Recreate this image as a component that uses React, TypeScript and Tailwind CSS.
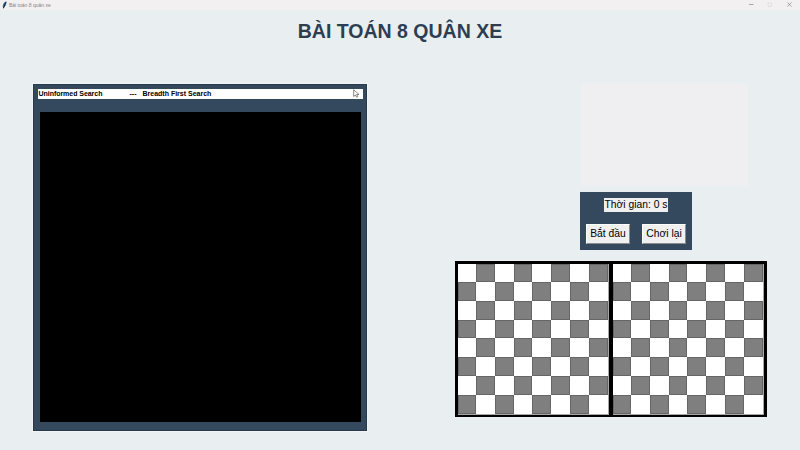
const cells = Array.from({ length: 64 }, (_, i) => (Math.floor(i / 8) + i) % 2 === 1);

function Board() {
  return (
    <div className="h-[151px] w-[151px] shrink-0 bg-[#a8a8a8]">
      <div className="grid h-[150px] w-[150px] grid-cols-[18px_19px_19px_18px_19px_19px_19px_19px] grid-rows-[18px_19px_19px_18px_19px_19px_19px_19px]">
        {cells.map((dark, i) => (
          <div
            key={i}
            className={
              dark
                ? "bg-[#7f7f7f] shadow-[inset_0_0_0_1px_#666666]"
                : "bg-white"
            }
          />
        ))}
      </div>
    </div>
  );
}

function TitleBar() {
  return (
    <header className="flex h-[10px] items-center bg-[#f3f0f1]">
      <svg className="ml-[2px] h-[8px] w-[5px]" viewBox="0 0 5 8">
        <path d="M4.5.3C2.4.8.8 3 .7 5.2L1.3 7.7 2.5 6C4 4.5 4.8 2.5 4.5.3Z" fill="#3c7096" />
        <path d="M3.8 1.2 1.4 7.2" stroke="#111820" strokeWidth=".8" fill="none" />
      </svg>
      <span className="ml-[2px] whitespace-nowrap text-[5px] leading-[10px] text-[#858585]">Bài toán 8 quân xe</span>
      <svg className="ml-auto mr-[7px] h-[8px] w-[44px]" viewBox="0 0 44 8" fill="none" stroke="#858585" strokeWidth=".7">
        <path d="M0 3.5H4.5" />
        <rect x="19" y="2" width="3.5" height="3.5" rx=".5" stroke="#d3dada" />
        <path d="m38.3 1.4 4.2 4.2m0-4.2-4.2 4.2" />
      </svg>
    </header>
  );
}

export default function App() {
  return (
    <div className="flex h-[450px] w-[800px] flex-col overflow-hidden bg-[#e9eef0] font-['Liberation_Sans',Arial,sans-serif]">
      <TitleBar />
      <h1 className="mt-[9px] h-[24px] whitespace-nowrap text-center text-[19.5px] font-bold leading-[24px] text-[#2c3e50]">
        BÀI TOÁN 8 QUÂN XE
      </h1>
      <main className="mt-[41px] flex items-start">
        <section className="ml-[33px] flex h-[347px] w-[334px] flex-col border border-[#26394d] bg-[#34495e] px-[3.5px] pt-[4px] shadow-[0_0_0_1px_#f1f3f4]">
          <div className="relative flex h-[10px] w-[325px] items-center bg-white pl-px text-[7px] font-bold leading-[10px] text-black">
            <span className="w-[91px] tracking-[-0.04px]">Uninformed Search</span>
            <span className="w-[13px]">---</span>
            <span className="whitespace-nowrap">Breadth First Search</span>
            <svg className="absolute left-[315px] top-0 h-[9px] w-[7px]" viewBox="0 0 7 9">
              <path d="M.7.7V7.5L2.4 6 3.7 8.3 4.8 7.7 3.7 5.5H6Z" fill="white" stroke="#555" strokeWidth=".7" />
            </svg>
          </div>
          <div className="ml-[2px] mt-[13px] h-[310px] w-[321px] bg-black" />
        </section>
        <section className="ml-[88px] flex flex-col items-start">
          <div className="-mt-px ml-[126px] h-[103px] w-[167px] bg-[#efeef0]" />
          <div className="ml-[125px] mt-[6px] flex h-[58px] w-[112px] flex-col items-center bg-[#34495e] pt-[6px]">
            <div className="h-[14px] w-[64px] whitespace-nowrap bg-[#f0f0f0] text-center text-[10.3px] leading-[13px] text-black">Thời gian: 0 s</div>
            <div className="mt-[12px] flex gap-[12px]">
              <button className="h-[20px] w-[44px] whitespace-nowrap border border-b-[#8c8c8c] border-r-[#8c8c8c] border-l-white border-t-white bg-[#f0f0f0] text-[10.3px] leading-[18px] text-black">Bắt đầu</button>
              <button className="h-[20px] w-[44px] whitespace-nowrap border border-b-[#8c8c8c] border-r-[#8c8c8c] border-l-white border-t-white bg-[#f0f0f0] text-[10.3px] leading-[18px] text-black">Chơi lại</button>
            </div>
          </div>
          <div className="mt-[11px] flex h-[156px] w-[312px] items-start gap-[4px] border-2 border-black bg-black pl-px pt-px">
            <Board />
            <Board />
          </div>
        </section>
      </main>
    </div>
  );
}
